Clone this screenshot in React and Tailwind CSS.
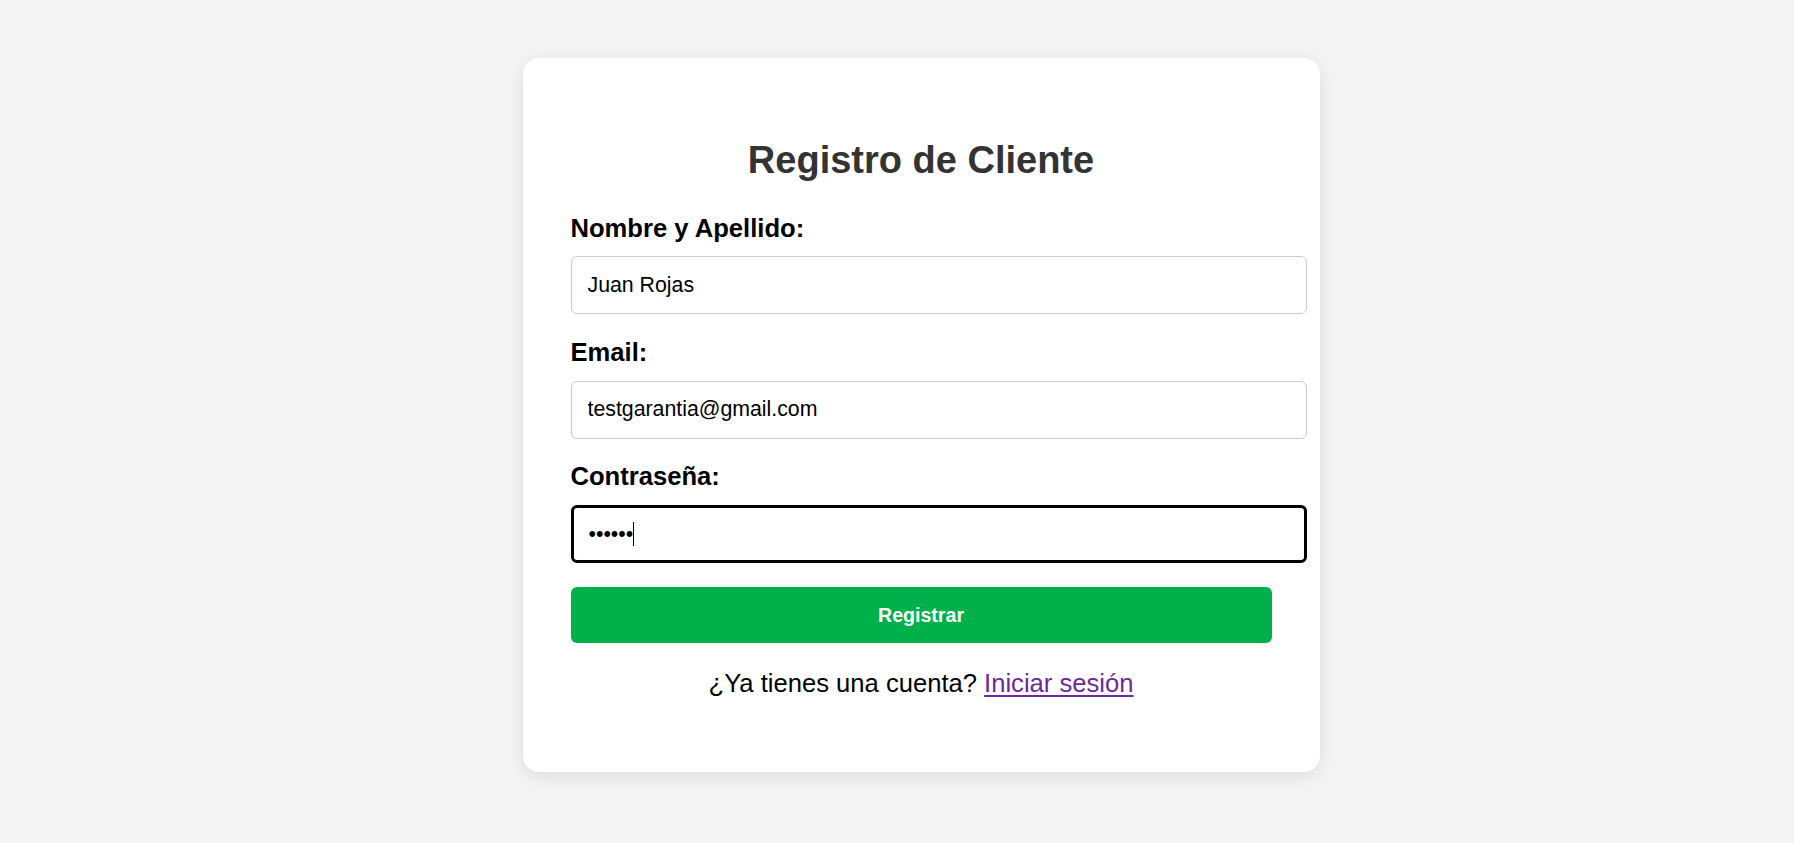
import React from 'react';

// registro de cliente

const Field = ({ label, children }) => (
    <div>
        <label className="block text-[25.6px] font-bold text-black leading-[29.4px] mb-[13.5px]">{label}</label>
        {children}
    </div>
);

const App = () => {
    return (
        <div className="min-h-screen bg-[#f4f4f4] flex justify-center pt-[58px]" style={{ fontFamily: '"Liberation Sans", Arial, sans-serif' }}>
            <div className="ml-[48px] w-[797px] h-[714px] bg-white rounded-[16px] shadow-[0_4px_18px_rgba(0,0,0,0.1)] px-[48px] pt-[80px]">
                <h2 className="text-center text-[38px] font-bold text-[#333] leading-[44px] mb-[31.5px]">Registro de Cliente</h2>

                <Field label="Nombre y Apellido:">
                    <input
                        type="text"
                        defaultValue="Juan Rojas"
                        className="block w-[736px] h-[58px] px-[16px] text-[21.3px] text-black border-[1.6px] border-[#cccccc] rounded-[6px] mb-[23.5px] outline-none"
                    />
                </Field>

                <Field label="Email:">
                    <input
                        type="email"
                        defaultValue="testgarantia@gmail.com"
                        className="block w-[736px] h-[58px] px-[16px] text-[21.3px] text-black border-[1.6px] border-[#cccccc] rounded-[6px] mb-[23.5px] outline-none"
                    />
                </Field>

                <Field label="Contraseña:">
                    <div className="relative mb-[24px]">
                        <input
                            type="password"
                            defaultValue="123456"
                            className="block w-[736px] h-[58px] px-[15px] text-[21.3px] text-black border-[3px] border-black rounded-[6px] outline-none"
                        />
                        <span className="absolute left-[62px] top-[17px] w-[1.5px] h-[24px] bg-black"></span>
                    </div>
                </Field>

                <button className="block w-full h-[56px] bg-[#00b04a] text-white text-[19.6px] font-bold rounded-[6px]">Registrar</button>

                <p className="text-center text-[25.6px] text-black mt-[26px] leading-[29.4px]">
                    ¿Ya tienes una cuenta? <a href="#" className="text-[#6a2a9c] underline underline-offset-[3px]">Iniciar sesión</a>
                </p>
            </div>
        </div>
    );
};

export default App;
